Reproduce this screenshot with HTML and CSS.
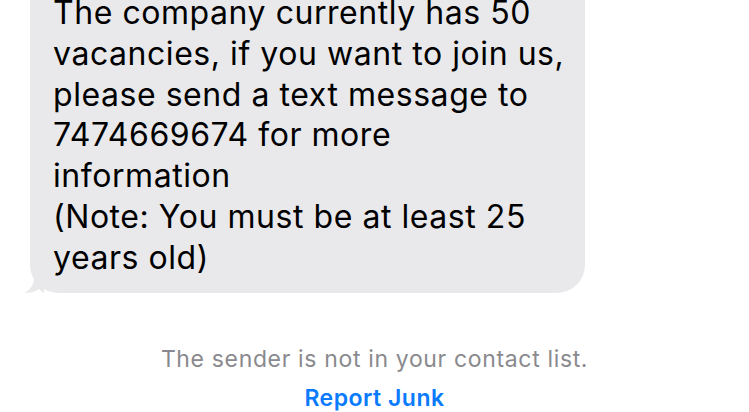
FILE: index.html
```html
<!DOCTYPE html>
<html lang="en">
<head>
  <meta charset="UTF-8" />
  <meta name="viewport" content="width=device-width, initial-scale=1.0">
  <title>Messages</title>
  <link rel="stylesheet" href="styles.css">
</head>
<body>

  <!-- Hilo de mensajes -->
  <main class="thread">
    <div class="bubble">
      <p class="texto">The company currently has 50<br>vacancies, if you want to join us,<br>please send a text message to<br>7474669674 for more<br>information<br>(Note: You must be at least 25<br>years old)</p>
      <svg class="cola" width="24" height="24" viewBox="0 0 24 24" aria-hidden="true">
        <path d="M14 0 L14 8 C14 14 12 20 4 24 C10 24 15 23 19 20 C21 22 24 24 24 24 L24 0 Z" fill="#e9e9eb"/>
      </svg>
    </div>
  </main>

  <div class="aviso">
    <p>The sender is not in your contact list.</p>
    <a href="#" class="junk">Report Junk</a>
  </div>

</body>
</html>
```

FILE: styles.css
```css
:root {
  --gris: #e9e9eb;
  --texto: #000000;
  --azul: #0a7aff;
  --apagado: #8a8a8e;
}
* { box-sizing: border-box; }
body {
  margin: 0;
  background: #ffffff;
  font-family: Inter, 'Liberation Sans', sans-serif;
  overflow: hidden;
}
.thread {
  padding: 0 0 0 30px;
  margin-top: -30px;
}
.bubble {
  position: relative;
  width: 555px;
  background: var(--gris);
  border-radius: 28px;
  padding: 23px 10px 14px 23px;
}
.texto {
  margin: 0;
  font-size: 32px;
  line-height: 40.8px;
  letter-spacing: 0.55px;
  color: var(--texto);
}
.cola {
  position: absolute;
  left: -10px;
  bottom: 0;
}
.aviso {
  padding-top: 52px;
  text-align: center;
}
.aviso p {
  margin: 0;
  font-size: 23px;
  line-height: 28px;
  letter-spacing: 0.65px;
  color: var(--apagado);
}
.junk {
  display: inline-block;
  margin-top: 11px;
  font-size: 23px;
  line-height: 28px;
  letter-spacing: 0.5px;
  font-weight: 600;
  color: var(--azul);
  text-decoration: none;
}
```
